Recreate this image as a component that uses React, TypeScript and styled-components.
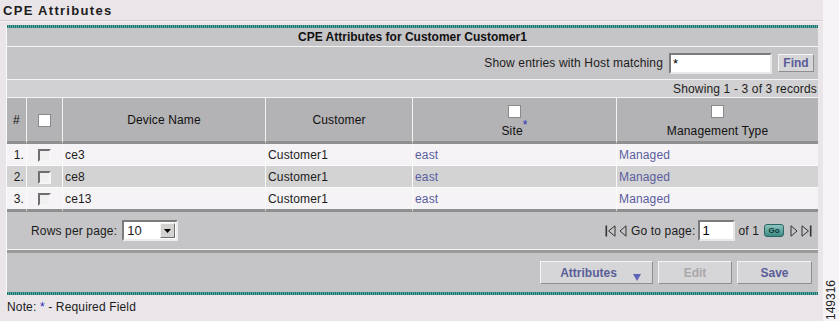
import styled, { createGlobalStyle } from 'styled-components';

const GlobalStyle = createGlobalStyle`
  html, body {
    margin: 0;
    padding: 0;
  }
  body {
    background: #e9e5e9;
    font-family: "Liberation Sans", Arial, sans-serif;
    font-size: 12px;
    letter-spacing: 0.15px;
    color: #1c1c1c;
  }
`;

const Page = styled.div`
  display: flex;
  width: 839px;
  height: 321px;
  overflow: hidden;
`;

const Main = styled.div`
  width: 823px;
  display: flex;
  flex-direction: column;
`;

const Margin = styled.div`
  flex: 1;
  background: #f6f4f6;
  display: flex;
  justify-content: center;
  align-items: flex-end;
  padding-bottom: 1px;
`;

const FigureId = styled.span`
  writing-mode: vertical-rl;
  transform: rotate(180deg);
  font-size: 12px;
  line-height: 12px;
  letter-spacing: 0;
  color: #222;
`;

const PageTitle = styled.h1`
  margin: 0;
  height: 21px;
  padding: 3px 0 0 3px;
  box-sizing: border-box;
  font-size: 13px;
  font-weight: bold;
  letter-spacing: 1.3px;
  border-bottom: 1px solid #d6cad0;
  box-shadow: 0 1px 0 #f7f3f5;
`;

const Panel = styled.div`
  margin: 4px 5px 0 6px;
  display: flex;
  flex-direction: column;
  border-left: 1px solid #fafafa;
`;

const TealRule = styled.div`
  height: 3px;
  background: repeating-linear-gradient(90deg, #1f746d 0 1px, #5da7a0 1px 2px);
`;

const PanelHeader = styled.div`
  height: 18px;
  background: #c5c4c6;
  border-bottom: 1px solid #f4f4f4;
  display: flex;
  align-items: center;
  justify-content: center;
  font-weight: bold;
  font-size: 12px;
  letter-spacing: 0;
  color: #111;
`;

const SearchRow = styled.div`
  height: 32px;
  background: #c5c4c6;
  border-bottom: 1px solid #f4f4f4;
  display: flex;
  align-items: center;
  justify-content: flex-end;
  padding-right: 4px;
  gap: 6px;
`;

const Label = styled.span`
  font-size: 12px;
  color: #1c1c1c;
`;

const TextInput = styled.div<{ $w: number }>`
  width: ${(p) => p.$w}px;
  height: 21px;
  box-sizing: border-box;
  background: #fff;
  border: 2px solid;
  border-color: #7b7b7b #e8e8e8 #e8e8e8 #7b7b7b;
  padding: 0 2px;
  font-size: 13px;
  line-height: 17px;
  color: #000;
`;

const Button = styled.div<{ $w: number; $disabled?: boolean }>`
  width: ${(p) => p.$w}px;
  height: 23px;
  box-sizing: border-box;
  background: #d6d5d7;
  border: 1px solid;
  border-color: #f4f4f4 #8e8e8e #8e8e8e #f4f4f4;
  display: flex;
  align-items: center;
  justify-content: center;
  font-weight: bold;
  font-size: 12px;
  letter-spacing: 0;
  color: ${(p) => (p.$disabled ? '#a9a8aa' : '#5a5e98')};
  position: relative;
`;

const SmallButton = styled(Button)`
  height: 18px;
`;

const DropMark = styled.span`
  position: absolute;
  right: 11px;
  bottom: 2px;
  width: 0;
  height: 0;
  border-left: 4px solid transparent;
  border-right: 4px solid transparent;
  border-top: 7px solid #5c63b8;
`;

const ShowingRow = styled.div`
  height: 17px;
  background: #d1d0d2;
  border-bottom: 1px solid #f4f4f4;
  display: flex;
  align-items: center;
  justify-content: flex-end;
  padding-right: 1px;
  font-size: 12px;
`;

const Grid = styled.table`
  width: 100%;
  table-layout: fixed;
  border-collapse: separate;
  border-spacing: 0;
  font-size: 12px;
`;

const HeadCell = styled.th<{ $align?: string }>`
  height: 43px;
  padding: 0;
  background: #b3b2b4;
  font-weight: normal;
  color: #111;
  text-align: ${(p) => p.$align || 'center'};
  vertical-align: middle;
  border-right: 1px solid #f2f2f2;
  border-bottom: 3px solid #8f8f8f;
  &:last-child {
    border-right: none;
  }
`;

const HeadStack = styled.div`
  display: flex;
  flex-direction: column;
  align-items: center;
  gap: 6px;
  padding-top: 3px;
`;

const Required = styled.sup`
  color: #2a2ab8;
  font-size: 12px;
  line-height: 0;
  vertical-align: 6px;
`;

const Row = styled.tr<{ $shade: boolean }>`
  background: ${(p) => (p.$shade ? '#d3d3d3' : '#f5f3f5')};
`;

const Cell = styled.td<{ $align?: string; $link?: boolean }>`
  height: 21px;
  padding: 0 2px;
  text-align: ${(p) => p.$align || 'left'};
  color: ${(p) => (p.$link ? '#5a5e9e' : '#1c1c1c')};
  border-right: 1px solid #fafafa;
  border-bottom: 1px solid #fafafa;
  white-space: nowrap;
  overflow: hidden;
  tr:last-child > & {
    border-bottom: 3px solid #8f8f8f;
  }
  &:last-child {
    border-right: none;
  }
`;

const Check = styled.span<{ $head?: boolean }>`
  display: inline-block;
  width: 13px;
  height: 13px;
  box-sizing: border-box;
  vertical-align: middle;
  background: ${(p) => (p.$head ? '#ffffff' : '#f1f0f1')};
  border: ${(p) => (p.$head ? '1px solid #8a8a8a' : '2px solid')};
  border-color: ${(p) =>
    p.$head ? '#8a8a8a' : '#6e6e6e #f6f6f6 #f6f6f6 #6e6e6e'};
`;

const Bar = styled.div<{ $h: number }>`
  height: ${(p) => p.$h}px;
  background: #c5c4c6;
  display: flex;
  align-items: center;
`;

const PagerBar = styled(Bar)`
  border-bottom: 1px solid #f4f4f4;
  padding: 0 6px 0 24px;
`;

const ActionBar = styled(Bar)`
  border-top: 3px solid #9a9a9a;
  justify-content: flex-end;
  gap: 5px;
  padding-right: 6px;
`;

const RowsPer = styled.div`
  display: flex;
  align-items: center;
  gap: 5px;
  font-size: 12px;
`;

const Select = styled.div`
  width: 56px;
  height: 21px;
  box-sizing: border-box;
  background: #fff;
  border: 2px solid;
  border-color: #7b7b7b #ececec #ececec #7b7b7b;
  display: flex;
  align-items: center;
  padding-left: 3px;
  font-size: 13px;
`;

const SelectValue = styled.span`
  flex: 1;
`;

const SelectArrow = styled.span`
  width: 15px;
  height: 15px;
  margin-right: 1px;
  box-sizing: border-box;
  background: #d4d2d0;
  border: 1px solid;
  border-color: #f4f4f4 #6f6f6f #6f6f6f #f4f4f4;
  display: flex;
  align-items: center;
  justify-content: center;
`;

const Pager = styled.div`
  margin-left: auto;
  display: flex;
  align-items: center;
  gap: 3px;
  font-size: 12px;
`;

const GoButton = styled.span`
  width: 18px;
  height: 11px;
  border-radius: 3px;
  background: linear-gradient(#8cc4bf, #3d8a85);
  border: 1px solid #2c6662;
  display: flex;
  align-items: center;
  justify-content: center;
  font-size: 8px;
  font-weight: bold;
  letter-spacing: 0;
  color: #0c3633;
  margin: 0 3px 0 2px;
`;

const Note = styled.div`
  padding: 5px 0 0 7px;
  font-size: 12px;
  color: #1c1c1c;
`;

const NoteStar = styled.span`
  color: #2a2ab8;
`;

const rows = [
  { n: 1, device: 'ce3', customer: 'Customer1', site: 'east', type: 'Managed' },
  { n: 2, device: 'ce8', customer: 'Customer1', site: 'east', type: 'Managed' },
  { n: 3, device: 'ce13', customer: 'Customer1', site: 'east', type: 'Managed' },
];

const First = () => (
  <svg width="11" height="12" viewBox="0 0 11 12">
    <rect x="0.5" y="0.5" width="1.6" height="11" fill="#333" />
    <path d="M10 0.8 L3.6 6 L10 11.2 Z" fill="none" stroke="#333" strokeWidth="1" />
  </svg>
);

const Prev = () => (
  <svg width="8" height="12" viewBox="0 0 8 12">
    <path d="M7 0.8 L1 6 L7 11.2 Z" fill="none" stroke="#333" strokeWidth="1" />
  </svg>
);

const Next = () => (
  <svg width="8" height="12" viewBox="0 0 8 12">
    <path d="M1 0.8 L7 6 L1 11.2 Z" fill="none" stroke="#333" strokeWidth="1" />
  </svg>
);

const Last = () => (
  <svg width="11" height="12" viewBox="0 0 11 12">
    <path d="M1 0.8 L7.4 6 L1 11.2 Z" fill="none" stroke="#333" strokeWidth="1" />
    <rect x="8.9" y="0.5" width="1.6" height="11" fill="#333" />
  </svg>
);

export default function App() {
  return (
    <Page>
      <GlobalStyle />
      <Main>
        <PageTitle>CPE Attributes</PageTitle>
        <Panel>
          <TealRule />
          <PanelHeader>CPE Attributes for Customer Customer1</PanelHeader>
          <SearchRow>
            <Label>Show entries with Host matching</Label>
            <TextInput $w={103}>*</TextInput>
            <SmallButton $w={36}>Find</SmallButton>
          </SearchRow>
          <ShowingRow>Showing 1 - 3 of 3 records</ShowingRow>
          <Grid>
            <colgroup>
              <col style={{ width: 20 }} />
              <col style={{ width: 36 }} />
              <col style={{ width: 203 }} />
              <col style={{ width: 147 }} />
              <col style={{ width: 204 }} />
              <col />
            </colgroup>
            <thead>
              <tr>
                <HeadCell>#</HeadCell>
                <HeadCell>
                  <Check $head />
                </HeadCell>
                <HeadCell>Device Name</HeadCell>
                <HeadCell>Customer</HeadCell>
                <HeadCell>
                  <HeadStack>
                    <Check $head />
                    <span>
                      Site<Required>*</Required>
                    </span>
                  </HeadStack>
                </HeadCell>
                <HeadCell>
                  <HeadStack>
                    <Check $head />
                    <span>Management Type</span>
                  </HeadStack>
                </HeadCell>
              </tr>
            </thead>
            <tbody>
              {rows.map((r) => (
                <Row key={r.n} $shade={r.n % 2 === 0}>
                  <Cell $align="right">{r.n}.</Cell>
                  <Cell $align="center">
                    <Check />
                  </Cell>
                  <Cell>{r.device}</Cell>
                  <Cell>{r.customer}</Cell>
                  <Cell $link>{r.site}</Cell>
                  <Cell $link>{r.type}</Cell>
                </Row>
              ))}
            </tbody>
          </Grid>
          <PagerBar $h={37}>
            <RowsPer>
              <span>Rows per page:</span>
              <Select>
                <SelectValue>10</SelectValue>
                <SelectArrow>
                  <svg width="7" height="4" viewBox="0 0 7 4">
                    <path d="M0 0 H7 L3.5 4 Z" fill="#000" />
                  </svg>
                </SelectArrow>
              </Select>
            </RowsPer>
            <Pager>
              <First />
              <Prev />
              <span style={{ marginLeft: 1 }}>Go to page:</span>
              <TextInput $w={37}>1</TextInput>
              <span>of 1</span>
              <GoButton>Go</GoButton>
              <Next />
              <Last />
            </Pager>
          </PagerBar>
          <ActionBar $h={39}>
            <Button $w={113}>
              <span style={{ marginRight: 16 }}>Attributes</span>
              <DropMark />
            </Button>
            <Button $w={74} $disabled>
              Edit
            </Button>
            <Button $w={75}>Save</Button>
          </ActionBar>
          <TealRule />
        </Panel>
        <Note>
          Note: <NoteStar>*</NoteStar> - Required Field
        </Note>
      </Main>
      <Margin>
        <FigureId>149316</FigureId>
      </Margin>
    </Page>
  );
}
